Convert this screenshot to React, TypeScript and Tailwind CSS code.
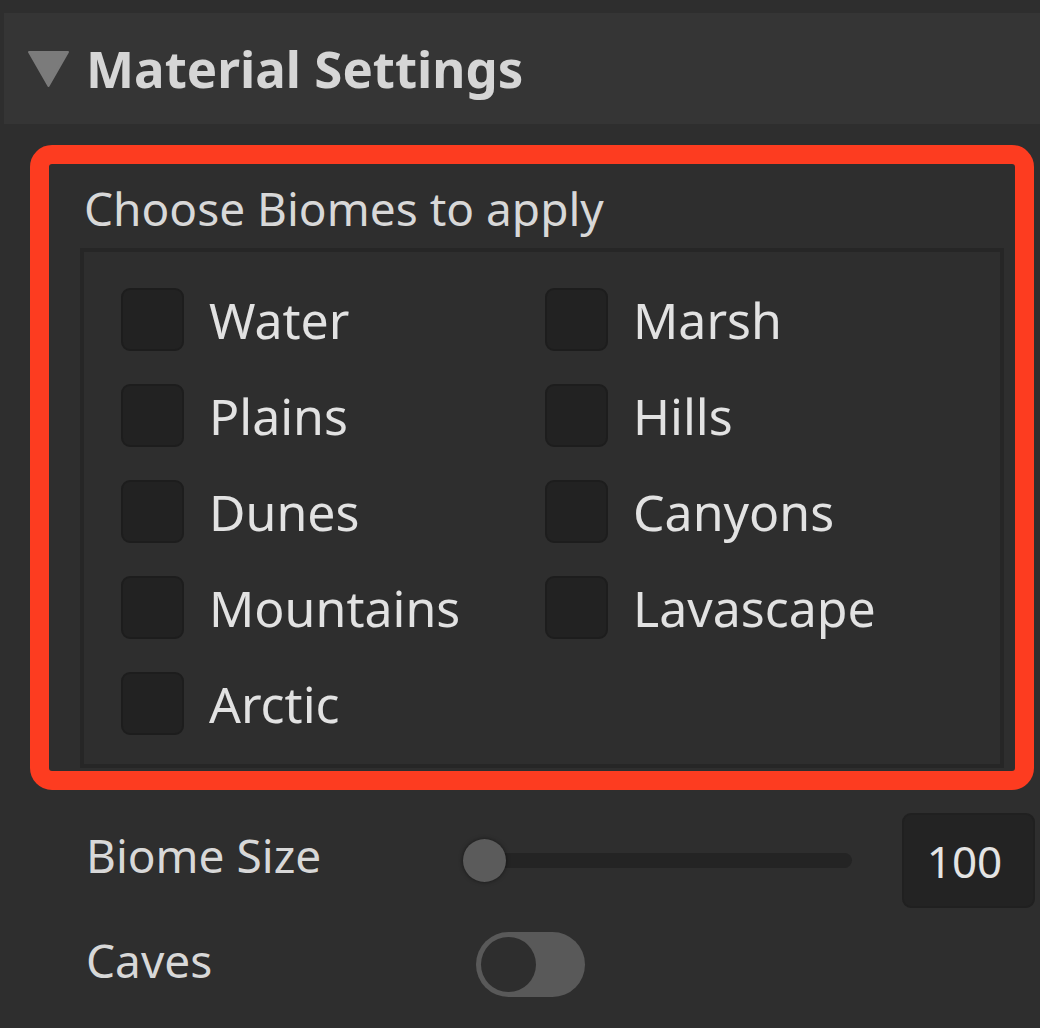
import { useState } from 'react'

const biomes = [
  ['Water', 'Marsh'],
  ['Plains', 'Hills'],
  ['Dunes', 'Canyons'],
  ['Mountains', 'Lavascape'],
  ['Arctic', null],
] as const

function Checkbox({ label }: { label: string }) {
  const [on, setOn] = useState(false)
  return (
    <button onClick={() => setOn(!on)} className="flex items-center gap-[25px] h-[63px] text-left">
      <span className="w-[63px] h-[63px] rounded-[9px] bg-[#222222] border-2 border-[#1d1d1d] shrink-0 flex items-center justify-center">
        {on && (
          <svg width="36" height="36" viewBox="0 0 24 24" fill="none" stroke="#e0e0e0" strokeWidth="3">
            <path d="M5 12l5 5 9-10" />
          </svg>
        )}
      </span>
      <span className="text-[50px] leading-none text-[#e2e2e2]">{label}</span>
    </button>
  )
}

export default function App() {
  const [caves, setCaves] = useState(false)

  return (
    <div className="w-[1040px] h-[1028px] bg-[#2e2e2e] pt-[13px] font-['Noto_Sans',sans-serif] overflow-hidden">
      <div className="ml-[4px] h-[111px] bg-[#353535] flex items-center pl-[24px] gap-[17px]">
        <svg width="41" height="36" viewBox="0 0 41 36">
          <polygon points="1,1 40,1 20.5,35" fill="#7b7b7b" stroke="#7b7b7b" strokeWidth="2" strokeLinejoin="round" />
        </svg>
        <span className="text-[51px] font-bold leading-none text-[#d6d6d6]">Material Settings</span>
      </div>

      <div className="mt-[21px] ml-[30px] w-[1004px] h-[645px] border-[19px] border-[#fd3c20] rounded-[22px] pl-[31px]">
        <div className="pt-[21px] pl-[4px] text-[46px] leading-none text-[#d8d8d8]">Choose Biomes to apply</div>
        <div className="mt-[17px] w-[924px] h-[520px] border-4 border-[#262626] pl-[37px] pt-[36px]">
          <div className="flex flex-col gap-[33px]">
            {biomes.map(([a, b]) => (
              <div key={a} className="grid grid-cols-[424px_1fr]">
                <Checkbox label={a} />
                {b && <Checkbox label={b} />}
              </div>
            ))}
          </div>
        </div>
      </div>

      <div className="mt-[23px] flex items-center h-[95px]">
        <span className="w-[463px] pl-[86px] pb-[12px] text-[46px] leading-none text-[#d8d8d8] shrink-0">Biome Size</span>
        <div className="relative w-[389px] h-[43px] flex items-center">
          <div className="ml-[21px] w-[368px] h-[15px] bg-[#242424] rounded-r-full" />
          <div className="absolute left-0 top-0 w-[43px] h-[43px] rounded-full bg-[#5b5b5b] shadow-[0_0_4px_rgba(0,0,0,0.5)]" />
        </div>
        <div className="ml-[50px] w-[133px] h-[95px] rounded-[9px] bg-[#232323] border-2 border-[#202020] flex items-center justify-center pr-[8px]">
          <span className="text-[44px] leading-none text-[#e4e4e4]">100</span>
        </div>
      </div>

      <div className="mt-[24px] flex items-center h-[65px]">
        <span className="w-[476px] pl-[86px] pb-[10px] text-[46px] leading-none text-[#d8d8d8] shrink-0">Caves</span>
        <button
          onClick={() => setCaves(!caves)}
          className={`w-[109px] h-[65px] rounded-full bg-[#595959] p-[5px] flex ${caves ? 'justify-end' : 'justify-start'}`}
        >
          <span className="w-[55px] h-[55px] rounded-full bg-[#2e2e2e]" />
        </button>
      </div>
    </div>
  )
}
